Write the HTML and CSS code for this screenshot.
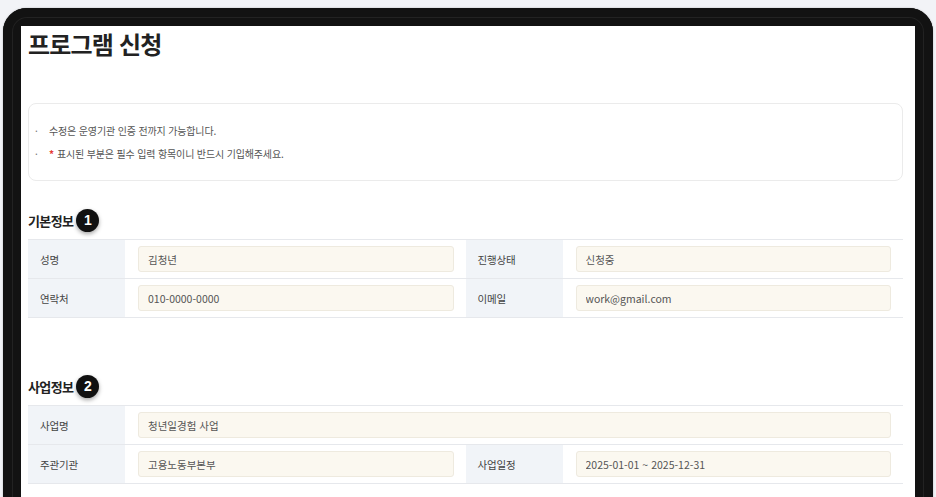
FILE: index.html
```html
<!DOCTYPE html>
<html lang="ko">
<head>
    <meta charset="UTF-8">
    <meta name="viewport" content="width=device-width, initial-scale=1.0">
    <title>프로그램 신청</title>
    <link rel="stylesheet" href="styles.css">
</head>
<body>
    <div class="device">
        <div class="screen">
            <h1 class="page-title">프로그램 신청</h1>

            <ul class="notice">
                <li>수정은 운영기관 인증 전까지 가능합니다.</li>
                <li><span class="req">*</span>표시된 부분은 필수 입력 항목이니 반드시 기입해주세요.</li>
            </ul>

            <div class="section">
                <h2 class="section-title">기본정보 <span class="badge">1</span></h2>
                <table class="form-table">
                    <colgroup>
                        <col class="col-label">
                        <col class="col-value">
                        <col class="col-label">
                        <col class="col-value">
                    </colgroup>
                    <tr>
                        <th>성명</th>
                        <td><input class="field" type="text" value="김청년" readonly></td>
                        <th>진행상태</th>
                        <td><input class="field" type="text" value="신청중" readonly></td>
                    </tr>
                    <tr>
                        <th>연락처</th>
                        <td><input class="field" type="text" value="010-0000-0000" readonly></td>
                        <th>이메일</th>
                        <td><input class="field" type="text" value="work@gmail.com" readonly></td>
                    </tr>
                </table>
            </div>

            <div class="section section-gap">
                <h2 class="section-title">사업정보 <span class="badge">2</span></h2>
                <table class="form-table">
                    <colgroup>
                        <col class="col-label">
                        <col class="col-value">
                        <col class="col-label">
                        <col class="col-value">
                    </colgroup>
                    <tr>
                        <th>사업명</th>
                        <td colspan="3"><input class="field" type="text" value="청년일경험 사업" readonly></td>
                    </tr>
                    <tr>
                        <th>주관기관</th>
                        <td><input class="field" type="text" value="고용노동부본부" readonly></td>
                        <th>사업일정</th>
                        <td><input class="field" type="text" value="2025-01-01 ~ 2025-12-31" readonly></td>
                    </tr>
                </table>
            </div>
        </div>
    </div>
</body>
</html>
```

FILE: styles.css
```css
html, body {
    height: 100%;
}

body {
    margin: 0;
    overflow: hidden;
    background: #f2f3f7;
    font-family: "Noto Sans CJK KR", "Noto Sans", sans-serif;
    color: #333;
}

.device {
    margin: 8px 3px 0 3px;
    min-height: 540px;
    padding: 18px 18px 0 18px;
    background: #121212;
    border-radius: 24px 24px 0 0;
    box-shadow: 0 0 2px rgba(0, 0, 0, 0.25), inset 0 0 0 9px #121212, inset 0 0 0 10px #222;
}

.screen {
    background: #fff;
    min-height: 540px;
    padding: 2px 12px 0 7px;
}

.page-title {
    margin: 0;
    font-size: 24px;
    line-height: 32px;
    font-weight: 700;
    color: #222;
    letter-spacing: -0.8px;
}

.notice {
    list-style: none;
    margin: 43px 0 0 0;
    padding: 15px 6px;
    border: 1px solid #ebebeb;
    border-radius: 8px;
    font-size: 10px;
    line-height: 23px;
    color: #555;
    letter-spacing: -0.15px;
}

.notice li::before {
    content: "·";
    display: inline-block;
    width: 14px;
    color: #777;
}

.notice .req {
    margin-right: 3px;
    color: #e53935;
    font-weight: 700;
}

.section {
    margin-top: 27px;
}

.section-gap {
    margin-top: 56px;
}

.section-title {
    display: flex;
    align-items: center;
    margin: 0 0 7px 0;
    height: 24px;
    font-size: 13px;
    font-weight: 700;
    color: #222;
    letter-spacing: -0.6px;
}

.badge {
    display: inline-flex;
    justify-content: center;
    align-items: center;
    width: 23px;
    height: 23px;
    margin-left: 3px;
    border-radius: 50%;
    background: #111;
    color: #fff;
    font-family: "Liberation Sans", Arial, sans-serif;
    font-size: 14px;
    font-weight: 700;
    letter-spacing: 0;
    box-shadow: 0 2px 4px rgba(0, 0, 0, 0.35);
}

.form-table {
    width: 100%;
    border-collapse: collapse;
    table-layout: fixed;
    border-top: 1px solid #e6e8ec;
}

.col-label {
    width: 97px;
}

.form-table tr {
    border-bottom: 1px solid #e6e8ec;
}

.form-table th {
    height: 38px;
    padding: 0 12px;
    background: #f1f4f8;
    text-align: left;
    font-size: 10.5px;
    font-weight: 400;
    color: #444;
    letter-spacing: -0.2px;
}

.form-table td {
    padding: 0 12px 0 13px;
}

.field {
    display: block;
    box-sizing: border-box;
    width: 100%;
    height: 26px;
    padding: 0 9px;
    border: 1px solid #eeeadf;
    border-radius: 3px;
    background: #fbf8f0;
    font-family: inherit;
    font-size: 10.5px;
    color: #555;
    outline: none;
}
```
